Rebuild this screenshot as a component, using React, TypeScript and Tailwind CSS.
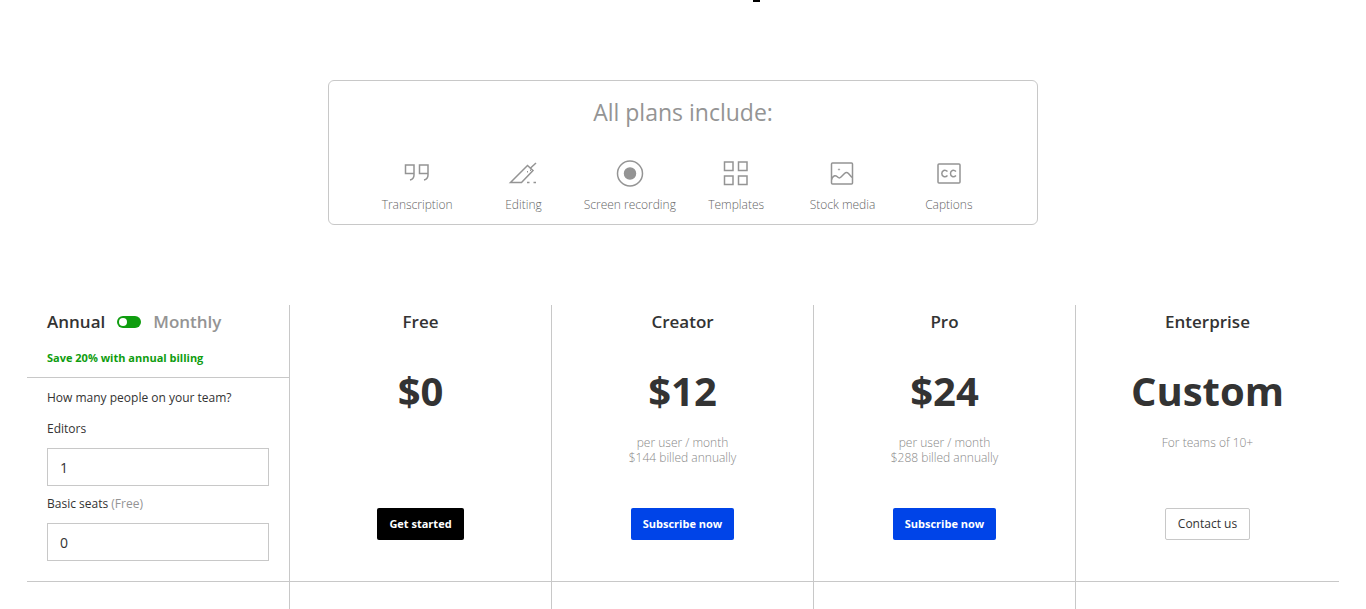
import { useState } from "react"
import type { ReactNode } from "react"

type Feature = { label: string; icon: ReactNode }

type Plan = {
  name: string
  price: string
  notes: string[]
  action: string
  variant: "dark" | "primary" | "outline"
}

const features: Feature[] = [
  {
    label: "Transcription",
    icon: (
      <path d="M14 17.5H5.5V9H14V19C14 22 12.5 23.5 10 24M28 17.5H19.5V9H28V19C28 22 26.5 23.5 24 24" />
    ),
  },
  {
    label: "Editing",
    icon: (
      <>
        <path d="M4.5 26.5L21.5 9.5L27 14.5L15.5 26.5Z" />
        <path d="M24 12.5L30 7" />
        <path d="M21.5 15V16.5M24.5 13.5V15" strokeWidth="1" />
        <path d="M21 26.5H23.5M27.5 26.5H30" />
      </>
    ),
  },
  {
    label: "Screen recording",
    icon: (
      <>
        <circle cx="17" cy="17.5" r="12.5" />
        <circle cx="17" cy="17.5" r="5.5" fill="currentColor" />
      </>
    ),
  },
  {
    label: "Templates",
    icon: (
      <path d="M5.5 6H14V14.5H5.5ZM19.5 6H28V14.5H19.5ZM5.5 20H14V28.5H5.5ZM19.5 20H28V28.5H19.5Z" />
    ),
  },
  {
    label: "Stock media",
    icon: (
      <>
        <rect x="6.5" y="7" width="21" height="21" rx="1" />
        <path d="M7 23.5V22C9 19.5 10.5 19 12 20.5S14.5 22.5 16 21L19.5 17.5Q21.5 15.5 23.5 17.5L27 21.5" />
        <circle cx="14" cy="13.5" r="0.6" strokeWidth="1" />
      </>
    ),
  },
  {
    label: "Captions",
    icon: (
      <>
        <rect x="6" y="8" width="22" height="19" rx="1" />
        <path d="M15.5 15.5C13 13 9.8 14.5 9.8 17.5S13 22 15.5 19.5M24 15.5C21.5 13 18.5 14.5 18.5 17.5S21.5 22 24 19.5" />
      </>
    ),
  },
]

const plans: Plan[] = [
  { name: "Free", price: "$0", notes: [], action: "Get started", variant: "dark" },
  {
    name: "Creator",
    price: "$12",
    notes: ["per user / month", "$144 billed annually"],
    action: "Subscribe now",
    variant: "primary",
  },
  {
    name: "Pro",
    price: "$24",
    notes: ["per user / month", "$288 billed annually"],
    action: "Subscribe now",
    variant: "primary",
  },
  {
    name: "Enterprise",
    price: "Custom",
    notes: ["For teams of 10+"],
    action: "Contact us",
    variant: "outline",
  },
]

const buttonStyles = {
  dark: "bg-black text-[11px] font-bold text-white",
  primary: "bg-[#0044e8] text-[11px] font-bold text-white",
  outline: "border border-[#c8c8c8] bg-white text-xs font-medium text-[#333]",
}

function FeatureBox() {
  return (
    <section className="mx-auto w-full max-w-[710px] rounded-md border border-[#c8c8c8] px-[35px] pt-[15px] pb-[9px] text-[#949494]">
      <h2 className="text-center text-[23px] leading-8">All plans include:</h2>
      <ul className="mt-7 grid grid-cols-6">
        {features.map((feature) => (
          <li key={feature.label} className="flex flex-col items-center gap-[5px]">
            <svg
              className="h-[34px] w-[34px]"
              viewBox="0 0 34 34"
              fill="none"
              stroke="currentColor"
              strokeWidth="1.5"
              aria-hidden="true"
            >
              {feature.icon}
            </svg>
            <span className="text-xs leading-5 font-light whitespace-nowrap text-[#666]">
              {feature.label}
            </span>
          </li>
        ))}
      </ul>
    </section>
  )
}

function SeatInput({ id, label, hint, initial }: { id: string; label: string; hint?: string; initial: string }) {
  const [value, setValue] = useState(initial)

  return (
    <div className="flex flex-col gap-[11px]">
      <label htmlFor={id} className="text-xs leading-4 font-medium">
        {label} {hint && <span className="text-[#949494]">{hint}</span>}
      </label>
      <input
        id={id}
        type="text"
        inputMode="numeric"
        value={value}
        onChange={(e) => setValue(e.target.value)}
        className="h-[38px] w-full border border-[#c8c8c8] px-3 text-sm font-medium"
      />
    </div>
  )
}

function BillingPanel() {
  const [monthly, setMonthly] = useState(false)

  return (
    <div className="border-r border-[#c8c8c8]">
      <div className="h-[73px] border-b border-[#c8c8c8] px-5 pt-[5px]">
        <div className="flex items-center gap-3 text-[17px] leading-6 font-semibold">
          <span>Annual</span>
          <button
            type="button"
            role="switch"
            aria-checked={monthly}
            aria-label="Monthly billing"
            onClick={() => setMonthly(!monthly)}
            className={`flex h-3 w-6 items-center rounded-full bg-[#0f9d0f] px-0.5 ${monthly ? "justify-end" : "justify-start"}`}
          >
            <span className="h-2 w-2 rounded-full bg-white" />
          </button>
          <span className="text-[#949494]">Monthly</span>
        </div>
        <p className="mt-4 text-[11px] leading-4 font-bold text-[#0f9d0f]">
          Save 20% with annual billing
        </p>
      </div>
      <div className="flex flex-col gap-2.5 px-5 pt-3 pb-5">
        <p className="mb-[5px] text-xs leading-4 font-medium">How many people on your team?</p>
        <SeatInput id="editors" label="Editors" initial="1" />
        <SeatInput id="basic-seats" label="Basic seats" hint="(Free)" initial="0" />
      </div>
    </div>
  )
}

function PlanColumn({ plan }: { plan: Plan }) {
  return (
    <div className="flex flex-col items-center border-r border-[#c8c8c8] pt-[5px] text-center last:border-r-0">
      <h3 className="text-[17px] leading-6 font-semibold">{plan.name}</h3>
      <p className="mt-[25px] text-[40px] leading-[64px] font-bold">{plan.price}</p>
      <div className="mt-3 h-[73px] text-xs leading-[15px] font-light text-[#888]">
        {plan.notes.map((note) => (
          <p key={note}>{note}</p>
        ))}
      </div>
      <button
        type="button"
        className={`h-8 rounded-xs px-3 ${buttonStyles[plan.variant]}`}
      >
        {plan.action}
      </button>
    </div>
  )
}

export default function App() {
  return (
    <main className="h-screen overflow-hidden bg-white px-[27px] font-['Open_Sans','Noto_Sans',sans-serif] text-[#333]">
      {/* tail of the heading above */}
      <div className="mx-auto flex h-20 w-full max-w-[154px] justify-end">
        <div className="h-0.5 w-[7px] bg-black" />
      </div>
      <FeatureBox />
      <section className="mt-20">
        <div className="grid grid-cols-[263fr_262fr_262fr_262fr_263fr] border-b border-[#c8c8c8]">
          <BillingPanel />
          {plans.map((plan) => (
            <PlanColumn key={plan.name} plan={plan} />
          ))}
        </div>
        <div className="grid h-10 grid-cols-[263fr_262fr_262fr_262fr_263fr]">
          <div className="border-r border-[#c8c8c8]" />
          {plans.map((plan) => (
            <div key={plan.name} className="border-r border-[#c8c8c8] last:border-r-0" />
          ))}
        </div>
      </section>
    </main>
  )
}
